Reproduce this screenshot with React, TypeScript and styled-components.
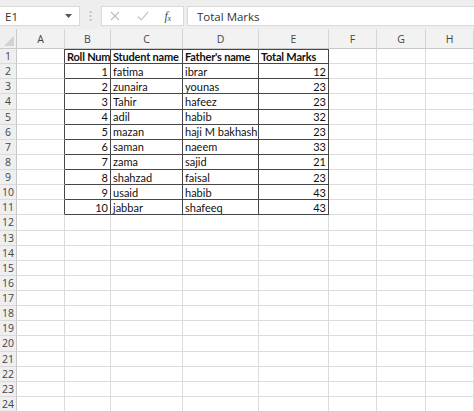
import React from "react";
import styled, { createGlobalStyle, css } from "styled-components";

const GlobalStyle = createGlobalStyle`
  html, body { margin: 0; padding: 0; background: #ffffff; overflow: hidden; }
  body { font-family: "Lato", "Liberation Sans", sans-serif; }
  * { box-sizing: border-box; }
`;

const Page = styled.div`
  width: 474px;
  height: 411px;
  overflow: hidden;
  display: flex;
  flex-direction: column;
`;

const FormulaBar = styled.div`
  height: 29px;
  flex: none;
  display: flex;
  align-items: stretch;
  padding: 6px 0 3px 0;
  background: #eeeeee;
`;

const NameBox = styled.div`
  width: 80px;
  background: #ffffff;
  border: 1px solid #d9d9d9;
  border-left: none;
  display: flex;
  align-items: center;
  justify-content: space-between;
  padding: 0 7px 0 5px;
  font-family: "Open Sans", "Liberation Sans", sans-serif;
  font-size: 11.5px;
  color: #333333;
`;

const Separator = styled.div`
  width: 21px;
  display: flex;
  align-items: center;
  justify-content: center;
`;

const FnBox = styled.div`
  width: 83px;
  background: #ffffff;
  border: 1px solid #d9d9d9;
  display: grid;
  grid-template-columns: 26px 30px 1fr;
  align-items: center;
  justify-items: center;
  padding: 0 6px 0 0;
`;

const Fx = styled.span`
  font-family: "Liberation Serif", serif;
  font-style: italic;
  font-size: 12px;
  color: #4a4a4a;
  letter-spacing: -0.5px;
  & sub {
    font-size: 8px;
    vertical-align: baseline;
    position: relative;
    top: 1px;
  }
`;

const FormulaInput = styled.div`
  flex: 1;
  margin-left: 3px;
  background: #ffffff;
  border: 1px solid #d9d9d9;
  border-right: none;
  display: flex;
  align-items: center;
  padding-left: 9px;
  font-family: "Open Sans", "Liberation Sans", sans-serif;
  font-size: 11.5px;
  color: #333333;
`;

const ROW_H = 15.14;

const Sheet = styled.div`
  flex: none;
  display: grid;
  grid-template-columns: 17px 48px 46px 72px 76px 70px 48px 49px 1fr;
  grid-template-rows: 20px repeat(24, ${ROW_H}px);
`;

const Corner = styled.div`
  background: #efefef;
  border-right: 1px solid #c9c9c9;
  border-bottom: 1px solid #c9c9c9;
  display: flex;
  align-items: flex-end;
  justify-content: flex-end;
  padding: 0 2px 2px 0;
`;

const ColHeader = styled.div`
  background: #f2f2f2;
  border-right: 1px solid #d6d6d6;
  border-bottom: 1px solid #c9c9c9;
  display: flex;
  align-items: center;
  justify-content: center;
  font-family: "Open Sans", "Liberation Sans", sans-serif;
  font-size: 10.5px;
  color: #444444;
  padding-top: 1px;
`;

const RowHeader = styled.div`
  background: #efefef;
  border-right: 1px solid #c9c9c9;
  border-bottom: 1px solid #dadada;
  display: flex;
  align-items: center;
  justify-content: center;
  font-family: "Open Sans", "Liberation Sans", sans-serif;
  font-size: 10.5px;
  color: #444444;
`;

const TABLE = "#474747";
const GRID = "#dcdcdc";

const Cell = styled.div<{
  $boxed?: boolean;
  $edge?: boolean;
  $top?: boolean;
  $align?: "left" | "right";
  $bold?: boolean;
}>`
  border-right: 1px solid ${(p) => (p.$boxed || p.$edge ? TABLE : GRID)};
  border-bottom: 1px solid ${(p) => (p.$boxed ? TABLE : GRID)};
  ${(p) =>
    p.$top &&
    css`
      border-top: 1px solid ${TABLE};
    `}
  display: flex;
  align-items: center;
  justify-content: ${(p) => (p.$align === "right" ? "flex-end" : "flex-start")};
  padding: 0 2px 0 2px;
  overflow: hidden;
  white-space: nowrap;
  font-size: 11px;
  font-weight: ${(p) => (p.$bold ? 700 : 400)};
  letter-spacing: ${(p) => (p.$bold ? "-0.2px" : "0")};
  color: #111111;
  line-height: 1;
`;

const COLS = ["A", "B", "C", "D", "E", "F", "G", "H"];

const data: [number, string, string, number][] = [
  [1, "fatima", "ibrar", 12],
  [2, "zunaira", "younas", 23],
  [3, "Tahir", "hafeez", 23],
  [4, "adil", "habib", 32],
  [5, "mazan", "haji M bakhash", 23],
  [6, "saman", "naeem", 33],
  [7, "zama", "sajid", 21],
  [8, "shahzad", "faisal", 23],
  [9, "usaid", "habib", 43],
  [10, "jabbar", "shafeeq", 43],
];

const headings = ["Roll Num", "Student name", "Father's name", "Total Marks"];

function cellContent(row: number, col: number): { text: string; align: "left" | "right"; bold: boolean } {
  if (row === 1 && col >= 1 && col <= 4) {
    return { text: headings[col - 1], align: "left", bold: true };
  }
  if (row >= 2 && row <= 11 && col >= 1 && col <= 4) {
    const r = data[row - 2];
    const v = r[col - 1];
    return { text: String(v), align: typeof v === "number" ? "right" : "left", bold: false };
  }
  return { text: "", align: "left", bold: false };
}

export default function App() {
  const rows = Array.from({ length: 24 }, (_, i) => i + 1);
  return (
    <Page>
      <GlobalStyle />
      <FormulaBar>
        <NameBox>
          <span>E1</span>
          <svg width="7" height="4" viewBox="0 0 7 4">
            <path d="M0 0 L7 0 L3.5 4 Z" fill="#555" />
          </svg>
        </NameBox>
        <Separator>
          <svg width="3" height="12" viewBox="0 0 3 12">
            <circle cx="1.5" cy="2" r="1" fill="#b5b5b5" />
            <circle cx="1.5" cy="6" r="1" fill="#b5b5b5" />
            <circle cx="1.5" cy="10" r="1" fill="#b5b5b5" />
          </svg>
        </Separator>
        <FnBox>
          <svg width="10" height="10" viewBox="0 0 10 10">
            <path d="M1 1 L9 9 M9 1 L1 9" stroke="#bdbdbd" strokeWidth="1.1" fill="none" />
          </svg>
          <svg width="12" height="10" viewBox="0 0 12 10">
            <path d="M1 5.5 L4.3 8.8 L11 1.2" stroke="#bdbdbd" strokeWidth="1.1" fill="none" />
          </svg>
          <Fx>
            f<sub>x</sub>
          </Fx>
        </FnBox>
        <FormulaInput>Total Marks</FormulaInput>
      </FormulaBar>
      <Sheet>
        <Corner>
          <svg width="10" height="10" viewBox="0 0 10 10">
            <path d="M10 0 L10 10 L0 10 Z" fill="#d2d2d2" />
          </svg>
        </Corner>
        {COLS.map((c) => (
          <ColHeader key={c}>{c}</ColHeader>
        ))}
        {rows.map((r) => (
          <React.Fragment key={r}>
            <RowHeader>{r}</RowHeader>
            {COLS.map((_, ci) => {
              const inTable = r <= 11 && ci >= 1 && ci <= 4;
              const edge = r <= 11 && ci === 0;
              const c = cellContent(r, ci);
              return (
                <Cell
                  key={ci}
                  $boxed={inTable}
                  $edge={edge}
                  $top={inTable && r === 1}
                  $align={c.align}
                  $bold={c.bold}
                >
                  {c.text}
                </Cell>
              );
            })}
          </React.Fragment>
        ))}
      </Sheet>
    </Page>
  );
}
